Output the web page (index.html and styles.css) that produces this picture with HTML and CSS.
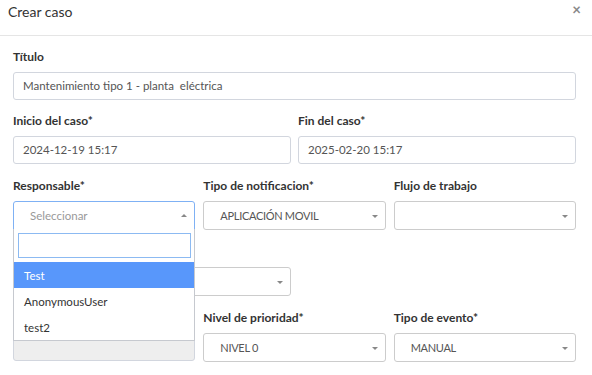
FILE: index.html
```html
<!DOCTYPE html>
<html lang="es">
<head>
    <meta charset="UTF-8">
    <title>Crear caso</title>
    <link rel="stylesheet" href="styles.css">
</head>
<body>
    <div class="modal">
        <div class="modal-header">
            <h4>Crear caso</h4>
            <span class="close">&times;</span>
        </div>

        <div class="modal-body">
            <div class="row">
                <div class="field">
                    <label>Título</label>
                    <div class="input">Mantenimiento tipo 1 - planta&nbsp; eléctrica</div>
                </div>
            </div>

            <div class="row two">
                <div class="field">
                    <label>Inicio del caso*</label>
                    <div class="input">2024-12-19 15:17</div>
                </div>
                <div class="field">
                    <label>Fin del caso*</label>
                    <div class="input">2025-02-20 15:17</div>
                </div>
            </div>

            <div class="row three">
                <div class="field">
                    <label>Responsable*</label>
                    <div class="select open">
                        <span class="placeholder">Seleccionar</span>
                        <b class="arrow up"></b>
                        <div class="dropdown">
                            <div class="search"></div>
                            <ul>
                                <li class="active">Test</li>
                                <li>AnonymousUser</li>
                                <li>test2</li>
                            </ul>
                        </div>
                    </div>
                </div>
                <div class="field">
                    <label>Tipo de notificacion*</label>
                    <div class="select"><span class="caps">APLICACIÓN MOVIL</span><b class="arrow"></b></div>
                </div>
                <div class="field">
                    <label>Flujo de trabajo</label>
                    <div class="select"><b class="arrow"></b></div>
                </div>
            </div>

            <!-- label of this row sits under the open dropdown -->
            <div class="row two">
                <div class="field">
                    <label>&nbsp;</label>
                    <div class="select"><b class="arrow"></b></div>
                </div>
                <div class="field"></div>
            </div>

            <div class="row three">
                <div class="field">
                    <label>&nbsp;</label>
                    <div class="input disabled"></div>
                </div>
                <div class="field">
                    <label>Nivel de prioridad*</label>
                    <div class="select"><span class="caps">NIVEL 0</span><b class="arrow"></b></div>
                </div>
                <div class="field">
                    <label>Tipo de evento*</label>
                    <div class="select"><span class="caps">MANUAL</span><b class="arrow"></b></div>
                </div>
            </div>
        </div>
    </div>
</body>
</html>
```

FILE: styles.css
```css
body {
    margin: 0;
    background-color: #fff;
    font-family: Lato, "Liberation Sans", sans-serif;
    color: #333;
}
.modal {
    width: 592px;
    height: 375px;
    overflow: hidden;
}
.modal-header {
    display: flex;
    justify-content: space-between;
    align-items: flex-start;
    padding: 3px 11px 14px 8px;
    border-bottom: 1px solid #e5e5e5;
}
.modal-header h4 {
    margin: 0;
    font-size: 14px;
    font-weight: normal;
    line-height: 18px;
    color: #333;
}
.close {
    font-size: 15px;
    font-weight: bold;
    line-height: 12px;
    color: #888;
}
.modal-body {
    padding: 13px 16px 0 13px;
}
.row {
    display: flex;
    gap: 8px;
    margin-bottom: 14px;
}
.row:first-child {
    margin-bottom: 13px;
}
.row.two {
    gap: 7px;
}
.field {
    flex: 1;
    min-width: 0;
}
label {
    display: block;
    font-size: 12px;
    font-weight: bold;
    line-height: 16px;
    margin-bottom: 7px;
    color: #333;
}
.input {
    box-sizing: border-box;
    height: 28px;
    padding: 0 9px;
    border: 1px solid #d2d6de;
    border-radius: 3px;
    font-size: 11.5px;
    line-height: 26px;
    color: #555;
    white-space: nowrap;
}
.input.disabled {
    background-color: #eee;
}
.select {
    position: relative;
    box-sizing: border-box;
    height: 29px;
    padding: 0 24px 0 16px;
    border: 1px solid #ccc;
    border-radius: 3px;
    font-size: 11.5px;
    line-height: 27px;
    color: #555;
    white-space: nowrap;
}
.select.open {
    border-color: #7fb1f4;
    border-radius: 3px 3px 0 0;
}
.placeholder {
    color: #999;
}
.caps {
    font-size: 11px;
    letter-spacing: -0.3px;
}
.arrow {
    position: absolute;
    right: 7px;
    top: 13px;
    border-top: 3px solid #888;
    border-left: 3px solid transparent;
    border-right: 3px solid transparent;
}
.arrow.up {
    top: 12px;
    border-top: 0;
    border-bottom: 3px solid #888;
}
.dropdown {
    position: absolute;
    top: 100%;
    left: -1px;
    right: -1px;
    z-index: 10;
    padding-top: 4px;
    background-color: #fff;
    border: 1px solid #c6c9cf;
    border-top: 0;
}
.search {
    box-sizing: border-box;
    height: 25px;
    margin: 0 3px 4px 4px;
    border: 1px solid #8cbaf2;
}
.dropdown ul {
    list-style: none;
    margin: 0;
    padding: 0;
}
.dropdown li {
    height: 26px;
    padding-left: 10px;
    line-height: 27px;
    font-size: 11.5px;
    color: #333;
}
.dropdown li.active {
    background-color: #5897fb;
    color: #fff;
}
```
